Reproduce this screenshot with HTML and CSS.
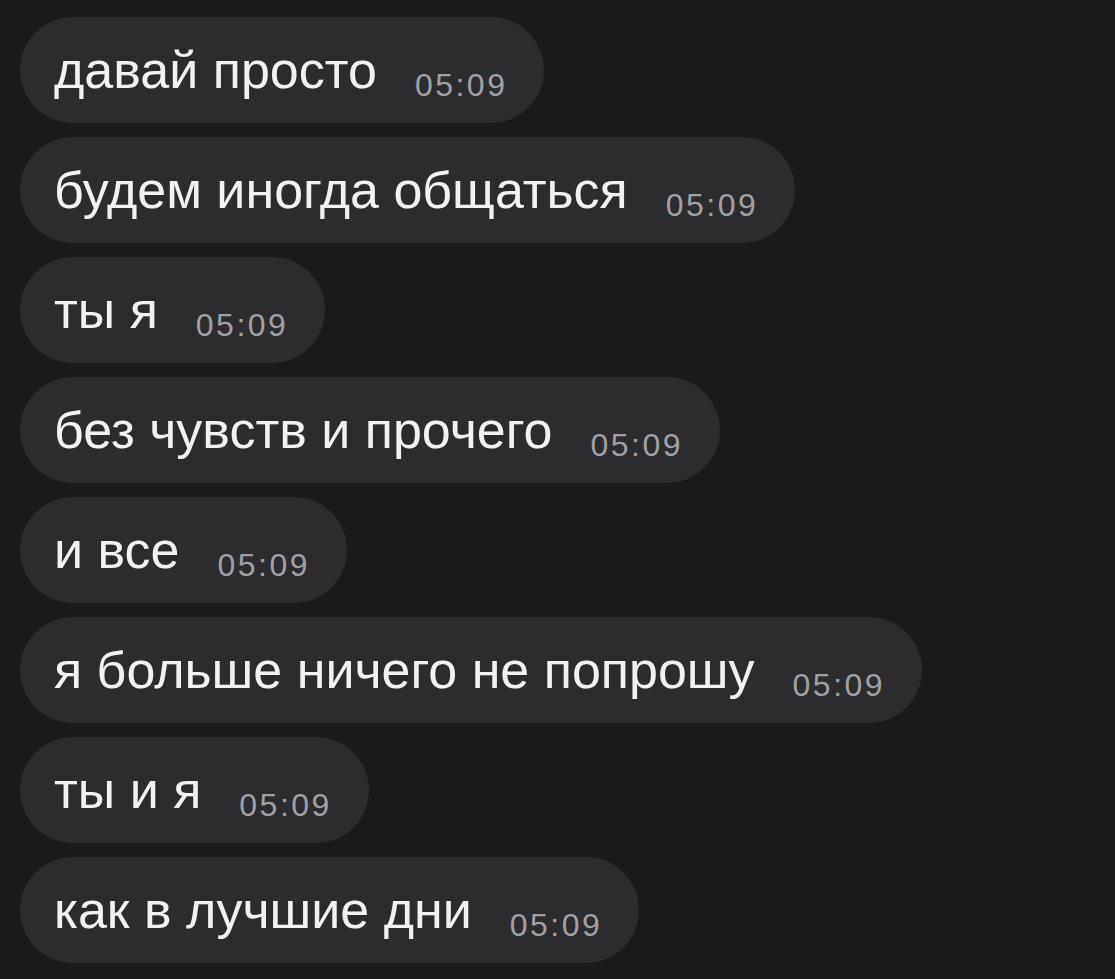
FILE: index.html
```html
<!DOCTYPE html>
<html lang="ru">
<head>
<meta charset="utf-8">
<title>Chat</title>
<link rel="stylesheet" href="styles.css">
</head>
<body>
<div class="chat">
  <div class="bubble"><span class="text">давай просто</span><span class="time">05:09</span></div>
  <div class="bubble"><span class="text">будем иногда общаться</span><span class="time">05:09</span></div>
  <div class="bubble"><span class="text">ты я</span><span class="time">05:09</span></div>
  <div class="bubble"><span class="text">без чувств и прочего</span><span class="time">05:09</span></div>
  <div class="bubble"><span class="text">и все</span><span class="time">05:09</span></div>
  <div class="bubble"><span class="text">я больше ничего не попрошу</span><span class="time">05:09</span></div>
  <div class="bubble"><span class="text">ты и я</span><span class="time">05:09</span></div>
  <div class="bubble"><span class="text">как в лучшие дни</span><span class="time">05:09</span></div>
</div>
</body>
</html>
```
FILE: styles.css
```css
html, body {
  margin: 0;
  padding: 0;
  background: #1b1b1d;
  height: 100%;
}
body {
  font-family: "Liberation Sans", Arial, sans-serif;
  overflow: hidden;
}
.chat {
  display: flex;
  flex-direction: column;
  align-items: flex-start;
  gap: 14px;
  padding: 17px 0 0 20px;
}
.bubble {
  display: flex;
  align-items: flex-start;
  box-sizing: border-box;
  height: 106px;
  border-radius: 53px;
  background: #2c2c2e;
  padding: 23px 37px 0 34px;
}
.text {
  font-size: 52px;
  line-height: 60px;
  color: #f2f2f4;
  white-space: nowrap;
}
.time {
  font-size: 32px;
  line-height: 36px;
  letter-spacing: 2.5px;
  color: #a0a0a5;
  margin-left: 38px;
  margin-top: 27px;
  white-space: nowrap;
}
```
